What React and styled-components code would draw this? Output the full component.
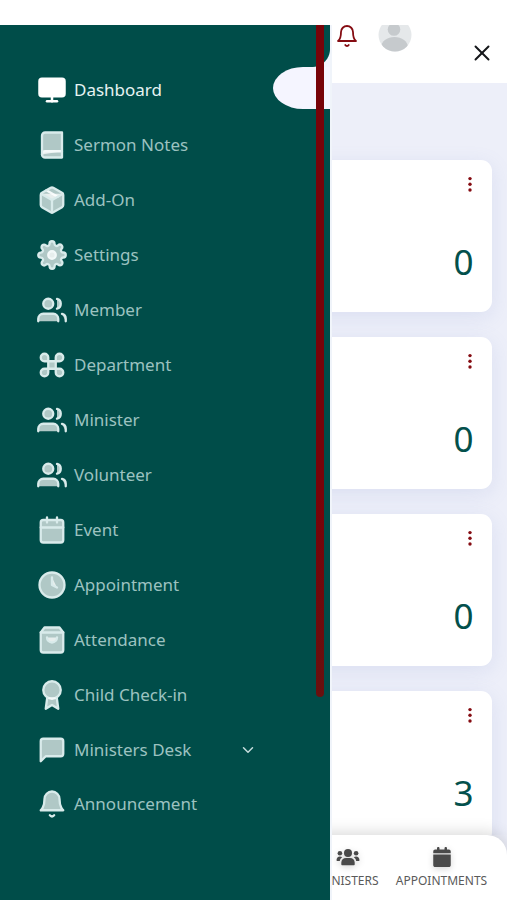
import React from "react";
import styled, { createGlobalStyle } from "styled-components";
import {
  FiMonitor, FiBook, FiPackage, FiSettings, FiUsers, FiCommand, FiCalendar,
  FiClock, FiShoppingBag, FiAward, FiMessageSquare, FiBell, FiChevronDown, FiX,
} from "react-icons/fi";
import { FaCalendar } from "react-icons/fa6";

const GlobalStyle = createGlobalStyle`
  *, *::before, *::after { box-sizing: border-box; }
  body { margin: 0; background: #fff; font-family: "Noto Sans", "Open Sans", sans-serif; }
`;

const Screen = styled.div`
  position: relative;
  display: flex;
  flex-direction: column;
  width: 507px;
  height: 900px;
  overflow: hidden;
  background: #fff;
`;

const StatusBar = styled.div`
  flex: none;
  height: 25px;
  background: #fff;
`;

const Page = styled.div`
  flex: 1;
  min-height: 0;
  display: flex;
  flex-direction: column;
  background: #edeff9;
`;

const Header = styled.header`
  flex: none;
  height: 58px;
  display: flex;
  justify-content: flex-end;
  align-items: flex-start;
  padding-right: 15px;
  background: #fff;
  overflow: hidden;
`;

const BellIcon = styled(FiBell)`
  width: 24px;
  height: 24px;
  margin: -1px 19px 0 0;
  color: #850c12;
  stroke-width: 1.8;
`;

const Avatar = styled.svg`
  width: 34px;
  height: 34px;
  margin: -7px 57px 0 0;
`;

const CloseIcon = styled(FiX)`
  width: 26px;
  height: 26px;
  margin: 15px -3px 0 0;
  color: #15171a;
  stroke-width: 1.8;
`;

const Cards = styled.main`
  flex: 1;
  min-height: 0;
  overflow: hidden;
  display: flex;
  flex-direction: column;
  gap: 25px;
  padding: 77px 15.5px 0 15px;
`;

const Card = styled.section`
  flex: none;
  height: 152px;
  display: flex;
  flex-direction: column;
  justify-content: space-between;
  align-items: flex-end;
  padding: 16px 18px 23px;
  border-radius: 11px;
  background: #fff;
  box-shadow: 0 5px 20px rgba(125, 140, 205, 0.16);
`;

const Dots = styled.svg`
  width: 8px;
  height: 18px;
  fill: #850c12;
`;

const Count = styled.div`
  font-size: 35px;
  line-height: 54px;
  color: #03504c;
`;

const BottomNav = styled.nav`
  flex: none;
  position: relative;
  height: 65px;
  display: flex;
  justify-content: flex-end;
  padding: 12px 18.5px 0 0;
  border-radius: 20px 20px 0 0;
  background: #fff;
  box-shadow: 0 -2px 16px rgba(0, 0, 0, 0.16);
`;

const BottomFill = styled.div`
  flex: none;
  display: flex;
  flex-direction: column;
  margin-top: -20px;
  padding-top: 20px;
`;

const NavItem = styled.div`
  width: 94px;
  display: flex;
  flex-direction: column;
  align-items: center;
  gap: 5px;
  color: #5a5a5a;
  font-size: 12px;
  line-height: 18px;
  white-space: nowrap;

  svg { height: 20px; color: #4a4a4a; filter: drop-shadow(0 2px 3px rgba(0, 0, 0, 0.16)); }
`;

const Drawer = styled.aside`
  position: absolute;
  top: 25px;
  left: 0;
  width: 332px;
  height: 875px;
  padding-top: 37.6px;
  background: #004d49;
  border-right: 2px solid #f0f4fa;
`;

const Menu = styled.ul`
  display: flex;
  flex-direction: column;
  margin: 0;
  padding: 0;
  list-style: none;
`;

const MenuItem = styled.li`
  position: relative;
  display: flex;
  align-items: center;
  height: 54.96px;
  padding-left: 37px;
  color: ${(p) => (p.$active ? "#e6f3f2" : "#9cc2c0")};
`;

const MenuIcon = styled.span`
  display: flex;
  width: 30px;
  height: 30px;
  margin-right: 7px;
  color: ${(p) => (p.$active ? "#fff" : "#d9ebeb")};

  svg {
    width: 30px;
    height: 30px;
    stroke-width: ${(p) => (p.$active ? 2 : 1.85)};
    fill: ${(p) => (p.$active ? "#fff" : "rgba(255, 255, 255, 0.69)")};
  }
`;

const MenuLabel = styled.span`
  width: 159px;
  font-size: 17px;
  line-height: 24px;
  white-space: nowrap;
`;

const Chevron = styled(FiChevronDown)`
  width: 18px;
  height: 18px;
  margin-left: 6px;
  color: #c5dddd;
`;

const ActiveTab = styled.span`
  position: absolute;
  top: 4.4px;
  right: 0;
  width: 57px;
  height: 42px;
  border-radius: 30px 0 0 30px / 21px 0 0 21px;
  background: #f5f5ff;

  &::before {
    content: "";
    position: absolute;
    right: 0;
    top: -18px;
    width: 18px;
    height: 18px;
    background: radial-gradient(circle at 0 0, transparent 17.5px, #f3f4fe 18.5px);
  }
`;

const ScrollThumb = styled.span`
  position: absolute;
  top: 0;
  left: 316px;
  width: 8px;
  height: 672px;
  border-radius: 0 0 4px 4px;
  background: linear-gradient(#780309 0%, #780309 70%, #68100f 100%);
`;

const menu = [
  ["Dashboard", FiMonitor],
  ["Sermon Notes", FiBook],
  ["Add-On", FiPackage],
  ["Settings", FiSettings],
  ["Member", FiUsers],
  ["Department", FiCommand],
  ["Minister", FiUsers],
  ["Volunteer", FiUsers],
  ["Event", FiCalendar],
  ["Appointment", FiClock],
  ["Attendance", FiShoppingBag],
  ["Child Check-in", FiAward],
  ["Ministers Desk", FiMessageSquare],
  ["Announcement", FiBell],
];

const counts = [0, 0, 0, 3];

function GroupIcon() {
  return (
    <svg width="24" height="20" viewBox="0 0 24 20" fill="currentColor">
      <circle cx="12" cy="6" r="4" />
      <circle cx="3.9" cy="6.2" r="2.3" />
      <circle cx="20.1" cy="6.2" r="2.3" />
      <path d="M5.3 17.3v-1.6c0-2.8 2-4.7 4.7-4.7h4c2.7 0 4.7 1.9 4.7 4.7v1.6c0 .6-.4 1-1 1H6.3c-.6 0-1-.4-1-1z" />
      <path d="M.5 13.2c0-2.1 1.4-3.6 3.4-3.6 1 0 1.7.2 2.3.7-1.3.9-2.1 2-2.4 3.7H1.2c-.4 0-.7-.3-.7-.8zM23.5 13.2c0-2.1-1.4-3.6-3.4-3.6-1 0-1.7.2-2.3.7 1.3.9 2.1 2 2.4 3.7h2.6c.4 0 .7-.3.7-.8z" />
    </svg>
  );
}

export default function App() {
  return (
    <>
      <GlobalStyle />
      <Screen>
        <StatusBar />
        <Page>
          <Header>
            <BellIcon />
            <Avatar viewBox="0 0 34 34">
              <defs>
                <clipPath id="avatar"><circle cx="17" cy="17" r="16.5" /></clipPath>
              </defs>
              <g clipPath="url(#avatar)">
                <rect width="34" height="34" fill="#e5e8ea" />
                <circle cx="16" cy="11.5" r="6.3" fill="#c6cacd" />
                <ellipse cx="16.5" cy="29.5" rx="13.5" ry="10.5" fill="#c6cacd" />
              </g>
            </Avatar>
            <CloseIcon />
          </Header>
          <Cards>
            {counts.map((count, i) => (
              <Card key={i}>
                <Dots viewBox="0 0 8 18">
                  <circle cx="4" cy="2.6" r="1.7" />
                  <circle cx="4" cy="8.3" r="1.7" />
                  <circle cx="4" cy="14" r="1.7" />
                </Dots>
                <Count>{count}</Count>
              </Card>
            ))}
          </Cards>
          <BottomFill>
            <BottomNav>
              <NavItem><GroupIcon />MINISTERS</NavItem>
              <NavItem><FaCalendar size={20} />APPOINTMENTS</NavItem>
            </BottomNav>
          </BottomFill>
        </Page>
        <Drawer>
          <Menu>
            {menu.map(([label, Icon], i) => (
              <MenuItem key={label} $active={i === 0}>
                <MenuIcon $active={i === 0}><Icon /></MenuIcon>
                <MenuLabel>{label}</MenuLabel>
                {label === "Ministers Desk" && <Chevron />}
                {i === 0 && <ActiveTab />}
              </MenuItem>
            ))}
          </Menu>
          <ScrollThumb />
        </Drawer>
      </Screen>
    </>
  );
}
